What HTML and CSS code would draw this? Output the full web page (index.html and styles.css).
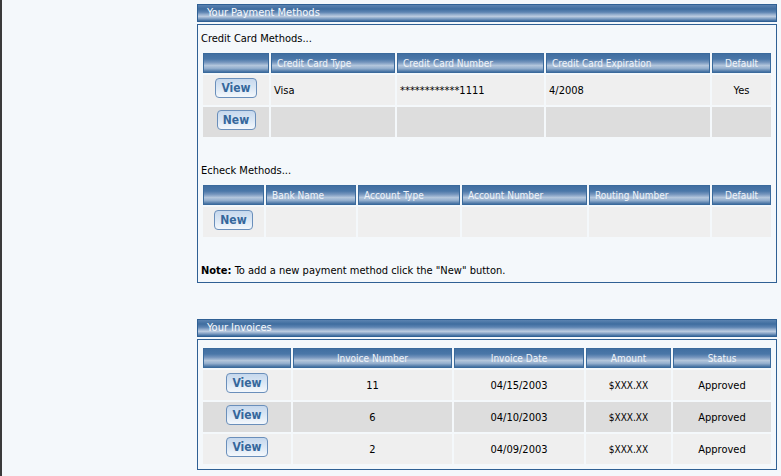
FILE: index.html
```html
<!DOCTYPE html>
<html lang="en">
  <head>
    <title>My Account</title>
    <meta charset="UTF-8" />
    <link rel="stylesheet" href="styles.css">
  </head>
  <body>
    <div id="sidebar"></div>

    <div id="content">
      <div class="section">
        <div class="title-bar">Your Payment Methods</div>
        <div class="panel">
          <div class="caption">Credit Card Methods...</div>
          <table class="grid">
            <tr>
              <th class="cc-action"></th>
              <th class="cc-type">Credit Card Type</th>
              <th class="cc-number">Credit Card Number</th>
              <th class="cc-exp">Credit Card Expiration</th>
              <th class="cc-default center">Default</th>
            </tr>
            <tr class="odd">
              <td class="center"><button class="btn">View</button></td>
              <td>Visa</td>
              <td>************1111</td>
              <td>4/2008</td>
              <td class="center">Yes</td>
            </tr>
            <tr class="even">
              <td class="center"><button class="btn">New</button></td>
              <td></td>
              <td></td>
              <td></td>
              <td></td>
            </tr>
          </table>

          <div class="caption spaced">Echeck Methods...</div>
          <table class="grid">
            <tr>
              <th class="ec-action"></th>
              <th class="ec-bank">Bank Name</th>
              <th class="ec-type">Account Type</th>
              <th class="ec-number">Account Number</th>
              <th class="ec-routing">Routing Number</th>
              <th class="ec-default center">Default</th>
            </tr>
            <tr class="odd">
              <td class="center"><button class="btn">New</button></td>
              <td></td>
              <td></td>
              <td></td>
              <td></td>
              <td></td>
            </tr>
          </table>

          <div class="caption spaced note">
            <b>Note:</b> To add a new payment method click the "New" button.
          </div>
        </div>
      </div>

      <div class="section">
        <div class="title-bar">Your Invoices</div>
        <div class="panel invoices">
          <table class="grid centered">
            <tr>
              <th class="inv-action"></th>
              <th class="inv-number">Invoice Number</th>
              <th class="inv-date">Invoice Date</th>
              <th class="inv-amount">Amount</th>
              <th class="inv-status">Status</th>
            </tr>
            <tr class="odd">
              <td><button class="btn">View</button></td>
              <td>11</td>
              <td>04/15/2003</td>
              <td class="amount">$XXX.XX</td>
              <td>Approved</td>
            </tr>
            <tr class="even">
              <td><button class="btn">View</button></td>
              <td>6</td>
              <td>04/10/2003</td>
              <td class="amount">$XXX.XX</td>
              <td>Approved</td>
            </tr>
            <tr class="odd">
              <td><button class="btn">View</button></td>
              <td>2</td>
              <td>04/09/2003</td>
              <td class="amount">$XXX.XX</td>
              <td>Approved</td>
            </tr>
          </table>
        </div>
      </div>
    </div>
  </body>
</html>
```

FILE: styles.css
```css
html,
body {
  margin: 0;
  padding: 0;
  overflow: hidden;
}

body {
  display: flex;
  min-height: 476px;
  background: #f4f8fb;
  border-left: 2px solid #3a3a3a;
  font-family: "DejaVu Sans Condensed", "DejaVu Sans", sans-serif;
  font-size: 11px;
  color: #000;
}

#sidebar {
  width: 195px;
  flex-shrink: 0;
}

#content {
  width: 580px;
  padding-top: 4px;
}

.section + .section {
  margin-top: 36px;
}

/* glossy blue bar */
.title-bar {
  height: 16px;
  line-height: 16px;
  padding-left: 9px;
  border: 1px solid #2f6094;
  background: linear-gradient(
    to bottom,
    #5b83b1 0%,
    #3f6d9f 25%,
    #5d84b2 45%,
    #9fb6d3 62%,
    #b9cadf 72%,
    #7e9dc2 86%,
    #3b6a9c 100%
  );
  color: #f6f9fc;
  font-size: 11px;
}

.panel {
  margin-top: 2px;
  border: 1px solid #2f6094;
  padding: 6px 3px 3px 3px;
}

.caption {
  line-height: 16px;
  margin-bottom: 4px;
}

.caption.spaced {
  margin-top: 24px;
}

.caption.note {
  margin-bottom: 0;
}

.grid {
  width: 572px;
  table-layout: fixed;
  border-collapse: separate;
  border-spacing: 2px;
}

.grid th,
.grid td {
  box-sizing: border-box;
  padding: 0 3px;
}

.grid th {
  height: 20px;
  padding: 1px 5px 0 5px;
  border: 1px solid #3a6a9c;
  background: linear-gradient(
    to bottom,
    #416fa1 0%,
    #4a77a8 28%,
    #7595bd 46%,
    #b3c6dc 64%,
    #94afce 80%,
    #3f6d9f 100%
  );
  color: #f0f4f9;
  font-size: 10px;
  font-weight: normal;
  text-align: left;
  white-space: nowrap;
}

.grid td {
  height: 30px;
  vertical-align: middle;
}

.grid tr.odd td {
  background: #efefef;
}

.grid tr.even td {
  background: #dddddd;
}

.grid .center,
.grid.centered th,
.grid.centered td {
  text-align: center;
}

.grid td.amount {
  font-size: 10px;
}

/* column widths */
.cc-action { width: 66px; }
.cc-type { width: 124px; }
.cc-number { width: 147px; }
.cc-exp { width: 164px; }
.cc-default { width: 59px; }

.ec-action { width: 61px; }
.ec-bank { width: 90px; }
.ec-type { width: 102px; }
.ec-number { width: 125px; }
.ec-routing { width: 121px; }
.ec-default { width: 59px; }

.inv-action { width: 88px; }
.inv-number { width: 159px; }
.inv-date { width: 130px; }
.inv-amount { width: 85px; }
.inv-status { width: 98px; }

.btn {
  height: 20px;
  min-width: 39px;
  padding: 0 5px;
  margin-bottom: 4px;
  border: 1px solid #6a8fbb;
  border-radius: 4px;
  background: linear-gradient(to bottom, #c6d8ed 0%, #dbe7f4 50%, #f4f8fc 100%);
  color: #35679c;
  font-family: "DejaVu Sans Condensed", "DejaVu Sans", sans-serif;
  font-size: 12px;
  font-weight: bold;
  line-height: 18px;
  vertical-align: middle;
  cursor: pointer;
}
```
